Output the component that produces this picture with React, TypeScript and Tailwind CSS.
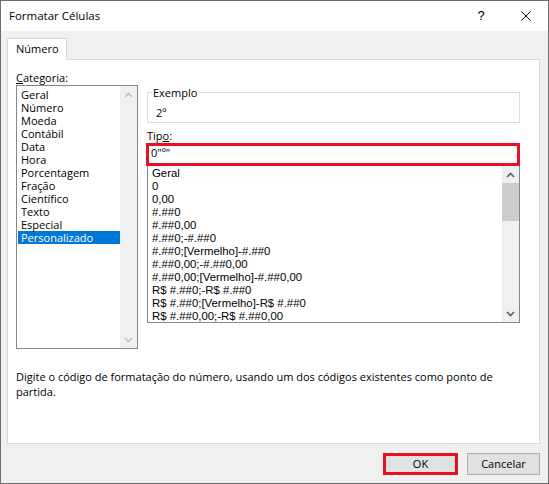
const categorias = [
  'Geral',
  'Número',
  'Moeda',
  'Contábil',
  'Data',
  'Hora',
  'Porcentagem',
  'Fração',
  'Científico',
  'Texto',
  'Especial',
  'Personalizado',
];

const tipos = [
  'Geral',
  '0',
  '0,00',
  '#.##0',
  '#.##0,00',
  '#.##0;-#.##0',
  '#.##0;[Vermelho]-#.##0',
  '#.##0,00;-#.##0,00',
  '#.##0,00;[Vermelho]-#.##0,00',
  'R$ #.##0;-R$ #.##0',
  'R$ #.##0;[Vermelho]-R$ #.##0',
  'R$ #.##0,00;-R$ #.##0,00',
];

function Chevron({ dir, color }: { dir: 'up' | 'down'; color: string }) {
  return (
    <svg width="9" height="6" viewBox="0 0 9 6">
      <path
        d={dir === 'up' ? 'M1 5 L4.5 1.5 L8 5' : 'M1 1 L4.5 4.5 L8 1'}
        fill="none"
        stroke={color}
        strokeWidth="1.6"
      />
    </svg>
  );
}

export default function App() {
  return (
    <div className="w-[549px] h-[484px] flex flex-col border border-[#6e6e6e] bg-[#f0f0f0] text-[11px] text-black font-['Open_Sans',sans-serif] overflow-hidden">
      {/* title bar */}
      <div className="h-[30px] shrink-0 bg-white flex items-center pl-[8px]">
        <span className="text-[11.5px]">Formatar Células</span>
        <div className="ml-auto w-[46px] flex justify-center text-[13px] font-['Liberation_Sans',sans-serif] font-light">?</div>
        <div className="w-[44px] flex justify-center">
          <svg width="10" height="10" viewBox="0 0 10 10">
            <path d="M0.5 0.5 L9.5 9.5 M9.5 0.5 L0.5 9.5" stroke="#111" strokeWidth="1" />
          </svg>
        </div>
      </div>

      <div className="flex-1 flex flex-col pl-[6px] pr-[8px] pt-[7px]">
        <div className="flex">
          <div className="-mb-px relative z-10 h-[22px] w-[60px] bg-white border border-b-0 border-[#d9d9d9] pl-[8px] flex items-center">
            Número
          </div>
        </div>

        <div className="h-[385px] border border-[#d9d9d9] bg-white pl-[8px] pr-[19px] flex flex-col">
          <div className="flex gap-[9px]">
            {/* categoria */}
            <div className="w-[122px] pt-[10px]">
              <div className="h-[15px] leading-[15px]">
                <span className="underline">C</span>ategoria:
              </div>
              <div className="h-[264px] border border-[#828790] flex">
                <div className="flex-1 pt-[1.5px] pl-[1px]">
                  {categorias.map((c) => (
                    <div
                      key={c}
                      className={
                        c === 'Personalizado'
                          ? 'h-[13px] leading-[13px] pl-[3px] bg-[#0078d7] text-white'
                          : 'h-[13px] leading-[13px] pl-[3px]'
                      }
                    >
                      {c}
                    </div>
                  ))}
                </div>
                <div className="w-[17px] bg-[#f0f0f0] flex flex-col justify-between">
                  <div className="h-[17px] flex items-center justify-center">
                    <Chevron dir="up" color="#c2c2c2" />
                  </div>
                  <div className="h-[17px] flex items-center justify-center">
                    <Chevron dir="down" color="#c2c2c2" />
                  </div>
                </div>
              </div>
            </div>

            {/* exemplo + tipo */}
            <div className="w-[373px]">
              <fieldset className="mt-[25px] border border-[#dcdcdc] pb-[2px]">
                <legend className="ml-[4px] px-[1px] leading-[15px]">Exemplo</legend>
                <div className="pt-[5px] pl-[8px] leading-[15px]">2º</div>
              </fieldset>

              <div className="mt-[5px] h-[15px] leading-[15px]">
                Tip<span className="underline">o</span>:
              </div>
              <div className="-ml-px w-[374px] h-[23px] border-[3px] border-[#e81123] pl-[2px] pb-[2px] flex items-center">
                0"º"
              </div>

              <div className="h-[157px] border border-t-0 border-[#828790] flex">
                <div className="flex-1 pt-[1px] pl-[4px] overflow-hidden font-['Liberation_Sans',sans-serif] text-[11.4px]">
                  {tipos.map((t) => (
                    <div key={t} className="h-[13px] leading-[13px] whitespace-nowrap">
                      {t}
                    </div>
                  ))}
                </div>
                <div className="w-[17px] bg-[#f0f0f0] flex flex-col">
                  <div className="h-[17px] flex items-center justify-center">
                    <Chevron dir="up" color="#606060" />
                  </div>
                  <div className="h-[38px] bg-[#cdcdcd]" />
                  <div className="flex-1" />
                  <div className="h-[17px] flex items-center justify-center">
                    <Chevron dir="down" color="#606060" />
                  </div>
                </div>
              </div>
            </div>
          </div>

          <p className="mt-[20px] leading-[15px]">
            Digite o código de formatação do número, usando um dos códigos existentes como ponto de
            <br />
            partida.
          </p>
        </div>

        <div className="mt-[9px] h-[22px] flex justify-end gap-[9px]">
          <div className="w-[75px] border-[3px] border-[#e81123] bg-[#e1e1e1] flex items-center justify-center">
            OK
          </div>
          <div className="w-[73px] border border-[#adadad] bg-[#e1e1e1] flex items-center justify-center">
            Cancelar
          </div>
        </div>
      </div>
    </div>
  );
}
